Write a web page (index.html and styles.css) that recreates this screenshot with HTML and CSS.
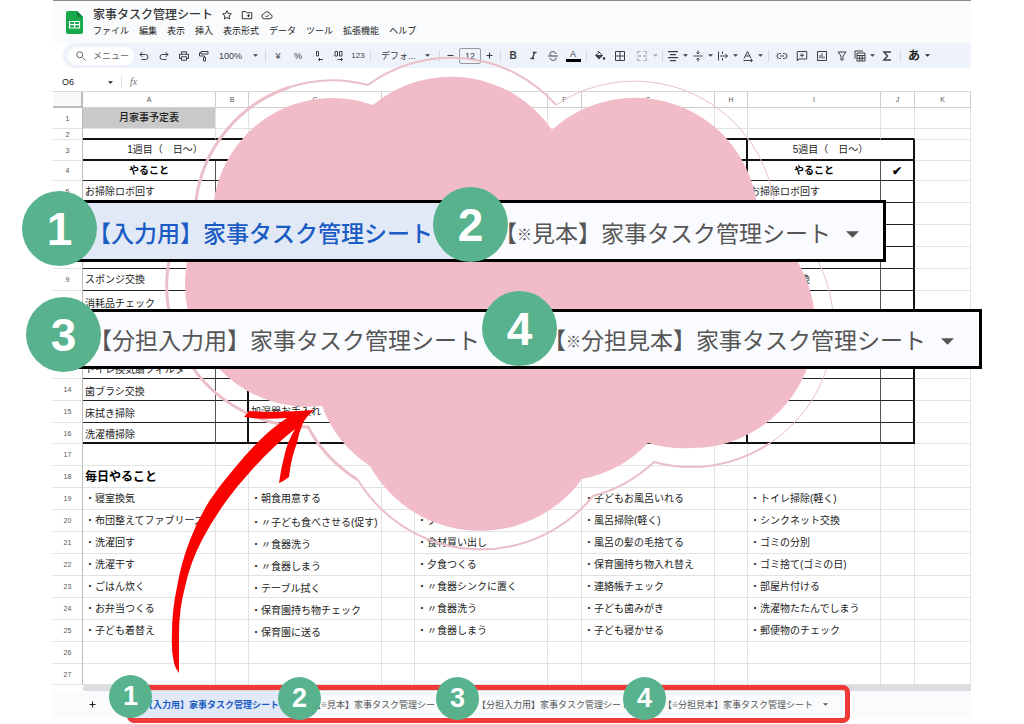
FILE: index.html
```html
<!DOCTYPE html>
<html lang="ja">
<head>
<meta charset="utf-8">
<title>家事タスク管理シート</title>
<link rel="stylesheet" href="styles.css">
</head>
<body>
<svg class="defs" aria-hidden="true">
  <symbol id="caret" viewBox="0 0 10 5"><path d="M0 0h10L5 5z" fill="currentColor"/></symbol>
  <symbol id="star" viewBox="0 0 24 24"><path d="M12 3.500l2.600 5.600 6.100.7-4.500 4.200 1.200 6-5.400-3-5.400 3 1.200-6-4.500-4.200 6.100-.7z"/></symbol>
  <symbol id="folder" viewBox="0 0 24 24"><path d="M2.500 5h7l2 2.500h10V19.500h-19zM12 13.500h6M15 10.500v6"/></symbol>
  <symbol id="cloud" viewBox="0 0 24 24"><path d="M6.500 19.500a5 5 0 0 1-.7-9.900 6.700 6.700 0 0 1 12.600 1 4.500 4.500 0 0 1 0 8.900zM8.500 13.500l2.500 2.500 4.500-4.500"/></symbol>
  <symbol id="search" viewBox="0 0 24 24"><path d="M15 15l6 6"/><circle cx="9.500" cy="9.500" r="6"/></symbol>
  <symbol id="undo" viewBox="0 0 24 24"><path d="M9 4L4 9l5 5M4 9h11a4.500 4.500 0 0 1 0 10H7"/></symbol>
  <symbol id="redo" viewBox="0 0 24 24"><path d="M15 4l5 5-5 5M20 9H9a4.500 4.500 0 0 0 0 10h8"/></symbol>
  <symbol id="print" viewBox="0 0 24 24"><path d="M7 8V3.500h10V8M7 17H3V8.500h18V17h-4M7 13.500h10v7H7z"/></symbol>
  <symbol id="paint" viewBox="0 0 24 24"><path d="M6 3h14v5H6zM6 5.500H3V12h10v3M11 15h4v7h-4z"/></symbol>
  <symbol id="dec-less" viewBox="0 0 24 24"><path d="M3 12h1M9 3h4v9H9zM22 19h-9M16 16l-3 3 3 3"/></symbol>
  <symbol id="dec-more" viewBox="0 0 24 24"><path d="M1 12h1M6 3h5v9H6zM15 3h5v9h-5zM11 19h10M18 16l3 3-3 3"/></symbol>
  <symbol id="minus" viewBox="0 0 24 24"><path d="M4 12h16"/></symbol>
  <symbol id="plus" viewBox="0 0 24 24"><path d="M4 12h16M12 4v16"/></symbol>
  <symbol id="italic" viewBox="0 0 24 24"><path d="M10 4h10M4 20h10M15 4L9 20" stroke-width="3.500"/></symbol>
  <symbol id="strike" viewBox="0 0 24 24"><path d="M2 12h20M18 8c-.5-6-12-6-12-1 0 2 1.500 3 3 3.500M6 16c.5 6 12 6 12 1 0-1-.3-1.500-.7-2"/></symbol>
  <symbol id="bucket" viewBox="0 0 24 24"><path d="M8 2l9 9-7 7-7-7 7-6z"/><path d="M4 11h12l-6 6z" fill="currentColor"/><path d="M20 14c3 4 1 5 0 5s-3-1 0-5z" fill="currentColor"/></symbol>
  <symbol id="borders" viewBox="0 0 24 24"><path d="M3 3h18v18H3zM12 3v18M3 12h18"/></symbol>
  <symbol id="merge" viewBox="0 0 24 24"><path d="M3 8V3h6M15 3h6v5M21 16v5h-6M9 21H3v-5M2 12h7M6 9l3 3-3 3M22 12h-7M18 9l-3 3 3 3"/></symbol>
  <symbol id="align" viewBox="0 0 24 24"><path d="M2 3h20M6 9h12M2 15h20M6 21h12" stroke-width="2.500"/></symbol>
  <symbol id="valign" viewBox="0 0 24 24"><path d="M3 12h18M12 1v7M9 5l3 3 3-3M12 23v-7M9 19l3-3 3 3"/></symbol>
  <symbol id="wrap" viewBox="0 0 24 24"><path d="M3 3v18M11 3v5M11 16v5M6 12h15M17 8l4 4-4 4"/></symbol>
  <symbol id="rotate" viewBox="0 0 24 24"><path d="M4 17L11 3l7 14M7 12h8M3 21h18M18 18l3 3-3 3"/></symbol>
  <symbol id="link" viewBox="0 0 24 24"><path d="M10 7H7a5 5 0 0 0 0 10h3M14 7h3a5 5 0 0 1 0 10h-3M8 12h8"/></symbol>
  <symbol id="comment" viewBox="0 0 24 24"><path d="M2.500 22V3h19v15H6zM12 6.500v8M8 10.500h8"/></symbol>
  <symbol id="chart" viewBox="0 0 24 24"><path d="M3 3h18v18H3zM8 10v7M12 7v10M16 13v4"/></symbol>
  <symbol id="filter" viewBox="0 0 24 24"><path d="M4 4h16l-6 8v8h-4v-8z"/></symbol>
  <symbol id="views" viewBox="0 0 24 24"><path d="M2 17V2h16M6 6h16v16H6zM6 11h16M6 16.500h16M11.500 11v11M16.500 11v11"/></symbol>
  <symbol id="sigma" viewBox="0 0 24 24"><path d="M18 6V4H6l7 8-7 8h12v-2" stroke-width="3"/></symbol>
</svg>

<main class="stage">
  <div class="app">
    <header class="top">
      <svg class="logo" viewBox="0 0 17 23"><path d="M2 0h9l6 6v15a2 2 0 0 1-2 2H2a2 2 0 0 1-2-2V2a2 2 0 0 1 2-2z" fill="#16a84b"/><path d="M11 0l6 6h-4a2 2 0 0 1-2-2z" fill="#0b7d37"/><path d="M3.500 10.500h10v6.500h-10zM3.500 13.700h10M8.500 10.500V17" fill="none" stroke="#fff" stroke-width="1.200"/></svg>
      <div class="heading">
        <div class="title-row">
          <h1>家事タスク管理シート</h1>
          <button aria-label="スター"><svg class="icon"><use href="#star"/></svg></button>
          <button aria-label="移動"><svg class="icon"><use href="#folder"/></svg></button>
          <button aria-label="保存状況"><svg class="icon"><use href="#cloud"/></svg></button>
        </div>
        <nav class="menu">
          <button>ファイル</button><button>編集</button><button>表示</button><button>挿入</button><button>表示形式</button><button>データ</button><button>ツール</button><button>拡張機能</button><button>ヘルプ</button>
        </nav>
      </div>
    </header>

    <div class="toolbar">
      <button class="pill"><svg class="icon"><use href="#search"/></svg>メニュー</button>
      <button class="tool" aria-label="元に戻す"><svg class="icon"><use href="#undo"/></svg></button>
      <button class="tool" aria-label="やり直し"><svg class="icon"><use href="#redo"/></svg></button>
      <button class="tool" aria-label="印刷"><svg class="icon"><use href="#print"/></svg></button>
      <button class="tool" aria-label="書式の貼り付け"><svg class="icon"><use href="#paint"/></svg></button>
      <label class="pick zoom"><select aria-label="ズーム"><option>100%</option></select><svg class="caret"><use href="#caret"/></svg></label>
      <i class="sep"></i>
      <button class="tool">¥</button>
      <button class="tool">%</button>
      <button class="tool" aria-label="小数点以下を減らす"><svg class="icon"><use href="#dec-less"/></svg></button>
      <button class="tool" aria-label="小数点以下を増やす"><svg class="icon"><use href="#dec-more"/></svg></button>
      <button class="tool small">123</button>
      <i class="sep"></i>
      <label class="pick family"><select aria-label="フォント"><option>デフォ...</option></select><svg class="caret"><use href="#caret"/></svg></label>
      <i class="sep"></i>
      <button class="tool narrow" aria-label="縮小"><svg class="icon tiny"><use href="#minus"/></svg></button>
      <input class="size" aria-label="フォントサイズ" value="12">
      <button class="tool narrow" aria-label="拡大"><svg class="icon tiny"><use href="#plus"/></svg></button>
      <i class="sep"></i>
      <button class="tool bold">B</button>
      <button class="tool" aria-label="斜体"><svg class="icon tiny"><use href="#italic"/></svg></button>
      <button class="tool" aria-label="取り消し線"><svg class="icon"><use href="#strike"/></svg></button>
      <button class="tool"><span class="ink">A</span></button>
      <i class="sep wide"></i>
      <button class="tool" aria-label="塗りつぶし"><svg class="icon"><use href="#bucket"/></svg></button>
      <button class="tool" aria-label="枠線"><svg class="icon"><use href="#borders"/></svg></button>
      <button class="drop faint" aria-label="結合"><svg class="icon"><use href="#merge"/></svg><svg class="caret"><use href="#caret"/></svg></button>
      <i class="sep"></i>
      <button class="drop" aria-label="水平方向"><svg class="icon"><use href="#align"/></svg><svg class="caret"><use href="#caret"/></svg></button>
      <button class="drop" aria-label="垂直方向"><svg class="icon"><use href="#valign"/></svg><svg class="caret"><use href="#caret"/></svg></button>
      <button class="drop" aria-label="折り返し"><svg class="icon"><use href="#wrap"/></svg><svg class="caret"><use href="#caret"/></svg></button>
      <button class="drop" aria-label="回転"><svg class="icon"><use href="#rotate"/></svg><svg class="caret"><use href="#caret"/></svg></button>
      <i class="sep wide"></i>
      <button class="tool" aria-label="リンク"><svg class="icon"><use href="#link"/></svg></button>
      <button class="tool" aria-label="コメント"><svg class="icon"><use href="#comment"/></svg></button>
      <button class="tool" aria-label="グラフ"><svg class="icon"><use href="#chart"/></svg></button>
      <button class="tool" aria-label="フィルタ"><svg class="icon"><use href="#filter"/></svg></button>
      <button class="drop" aria-label="表示"><svg class="icon"><use href="#views"/></svg><svg class="caret"><use href="#caret"/></svg></button>
      <button class="tool" aria-label="関数"><svg class="icon"><use href="#sigma"/></svg></button>
      <i class="sep wide"></i>
      <button class="drop kana">あ<svg class="caret"><use href="#caret"/></svg></button>
    </div>

    <div class="formula">
      <input class="name-box" aria-label="セル" value="O6">
      <svg class="caret"><use href="#caret"/></svg>
      <span class="fx">fx</span>
    </div>

    <table class="sheet">
      <colgroup><col class="c-num"><col class="c-task"><col class="c-check"><col class="c-task"><col class="c-check"><col class="c-task"><col class="c-check"><col class="c-task"><col class="c-check"><col class="c-task"><col class="c-check"><col></colgroup>
      <thead><tr><th class="corner"></th><th>A</th><th>B</th><th>C</th><th>D</th><th>E</th><th>F</th><th>G</th><th>H</th><th>I</th><th>J</th><th>K</th></tr></thead>
      <tbody>
      <tr class="r-title"><th>1</th><td class="month">月家事予定表</td><td></td><td></td><td></td><td></td><td></td><td></td><td></td><td></td><td></td><td></td></tr>
      <tr class="r-gap"><th>2</th><td></td><td></td><td></td><td></td><td></td><td></td><td></td><td></td><td></td><td></td><td></td></tr>
      <tr class="r-week"><th>3</th><td colspan="2">1週目（　日〜）</td><td colspan="2"></td><td colspan="2"></td><td colspan="2"></td><td colspan="2">5週目（　日〜）</td><td></td></tr>
      <tr class="task r-head"><th>4</th><td>やること</td><td></td><td></td><td></td><td></td><td></td><td></td><td></td><td>やること</td><td class="tick">✔</td><td></td></tr>
      <tr class="task"><th>5</th><td>お掃除ロボ回す</td><td></td><td></td><td></td><td></td><td></td><td></td><td></td><td>お掃除ロボ回す</td><td></td><td></td></tr>
      <tr class="task"><th></th><td></td><td></td><td></td><td></td><td></td><td></td><td></td><td></td><td></td><td></td><td></td></tr>
      <tr class="task"><th></th><td></td><td></td><td></td><td></td><td></td><td></td><td></td><td></td><td></td><td></td><td></td></tr>
      <tr class="task"><th></th><td></td><td></td><td></td><td></td><td></td><td></td><td></td><td></td><td></td><td></td><td></td></tr>
      <tr class="task"><th>9</th><td>スポンジ交換</td><td></td><td></td><td></td><td></td><td></td><td></td><td></td><td>スポンジ交換</td><td></td><td></td></tr>
      <tr class="task"><th></th><td class="low">消耗品チェック</td><td></td><td></td><td></td><td></td><td></td><td></td><td></td><td></td><td></td><td></td></tr>
      <tr class="task"><th></th><td></td><td></td><td></td><td></td><td></td><td></td><td></td><td></td><td></td><td></td><td></td></tr>
      <tr class="task"><th></th><td></td><td></td><td></td><td></td><td></td><td></td><td></td><td></td><td></td><td></td><td></td></tr>
      <tr class="task"><th></th><td class="low">トイレ換気扇フィルター</td><td></td><td></td><td></td><td></td><td></td><td></td><td></td><td></td><td></td><td></td></tr>
      <tr class="task"><th>14</th><td class="low">歯ブラシ交換</td><td></td><td></td><td></td><td></td><td></td><td></td><td></td><td></td><td></td><td></td></tr>
      <tr class="task"><th>15</th><td class="low">床拭き掃除</td><td></td><td>加湿器お手入れ</td><td></td><td></td><td></td><td></td><td></td><td></td><td></td><td></td></tr>
      <tr class="task short last"><th>16</th><td class="low">洗濯槽掃除</td><td></td><td></td><td></td><td></td><td></td><td></td><td></td><td></td><td></td><td></td></tr>
      <tr><th>17</th><td></td><td></td><td></td><td></td><td></td><td></td><td></td><td></td><td></td><td></td><td></td></tr>
      <tr><th>18</th><td class="daily">毎日やること</td><td></td><td></td><td></td><td></td><td></td><td></td><td></td><td></td><td></td><td></td></tr>
      <tr><th>19</th><td>・寝室換気</td><td></td><td>・朝食用意する</td><td></td><td></td><td></td><td>・子どもお風呂いれる</td><td></td><td>・トイレ掃除(軽く)</td><td></td><td></td></tr>
      <tr><th>20</th><td>・布団整えてファブリーズ</td><td></td><td class="low">・〃子ども食べさせる(促す)</td><td></td><td>・ク</td><td></td><td>・風呂掃除(軽く)</td><td></td><td>・シンクネット交換</td><td></td><td></td></tr>
      <tr><th>21</th><td>・洗濯回す</td><td></td><td class="low">・〃食器洗う</td><td></td><td>・食材買い出し</td><td></td><td>・風呂の髪の毛捨てる</td><td></td><td>・ゴミの分別</td><td></td><td></td></tr>
      <tr><th>22</th><td>・洗濯干す</td><td></td><td class="low">・〃食器しまう</td><td></td><td>・夕食つくる</td><td></td><td>・保育園持ち物入れ替え</td><td></td><td>・ゴミ捨て(ゴミの日)</td><td></td><td></td></tr>
      <tr><th>23</th><td>・ごはん炊く</td><td></td><td class="low">・テーブル拭く</td><td></td><td>・〃食器シンクに置く</td><td></td><td>・連絡帳チェック</td><td></td><td>・部屋片付ける</td><td></td><td></td></tr>
      <tr><th>24</th><td>・お弁当つくる</td><td></td><td class="low">・保育園持ち物チェック</td><td></td><td>・〃食器洗う</td><td></td><td>・子ども歯みがき</td><td></td><td>・洗濯物たたんでしまう</td><td></td><td></td></tr>
      <tr><th>25</th><td>・子ども着替え</td><td></td><td class="low">・保育園に送る</td><td></td><td>・〃食器しまう</td><td></td><td>・子ども寝かせる</td><td></td><td>・郵便物のチェック</td><td></td><td></td></tr>
      <tr><th>26</th><td></td><td></td><td></td><td></td><td></td><td></td><td></td><td></td><td></td><td></td><td></td></tr>
      <tr class="short"><th>27</th><td></td><td></td><td></td><td></td><td></td><td></td><td></td><td></td><td></td><td></td><td></td></tr>
      </tbody>
    </table>
    <div class="scrollbar"></div>
    <footer class="tabs">
      <button class="add" aria-label="シートを追加"><svg class="icon tiny"><use href="#plus"/></svg></button>
      <button class="tab active">【入力用】家事タスク管理シート<svg class="caret"><use href="#caret"/></svg></button>
      <button class="tab"><span>【<small>※</small>見本】家事タスク管理シート</span><svg class="caret"><use href="#caret"/></svg></button>
      <button class="tab">【分担入力用】家事タスク管理シート<svg class="caret"><use href="#caret"/></svg></button>
      <button class="tab"><span>【<small>※</small>分担見本】家事タスク管理シート</span><svg class="caret"><use href="#caret"/></svg></button>
    </footer>
  </div>

  <svg class="blob" viewBox="0 0 1024 724" aria-hidden="true">
    <path fill="#f1bcc7" d="M213 207A120 120 0 0 1 373 105A122 122 0 0 1 552 130A123 123 0 0 1 758 221A123 123 0 0 1 815 325A123 123 0 0 1 692 448A130 130 0 0 1 648 443A123 123 0 0 1 582 479A126 126 0 0 1 370 466A123 123 0 0 1 322 406A123 123 0 0 1 185 285A123 123 0 0 1 213 207z"/>
    <g fill="none" stroke="#eabfc8">
      <path stroke-width="3" d="M358 480A141 141 0 0 1 308 427A141 141 0 0 1 196 200A138 138 0 0 1 290 87"/>
      <path stroke-width="2" d="M290 87A138 138 0 0 1 368 85A140 140 0 0 1 556 105"/>
      <path stroke-width="1" d="M556 105A141 141 0 0 1 775 211A141 141 0 0 1 770 443"/>
      <path stroke-width="2" d="M770 443A141 141 0 0 1 654 462A141 141 0 0 1 593 496A144 144 0 0 1 358 480"/>
    </g>
  </svg>

  <section class="zoomed first">
    <button class="tab active">【入力用】家事タスク管理シート<svg class="caret"><use href="#caret"/></svg></button>
    <button class="tab"><span>【<small>※</small>見本】家事タスク管理シート</span><svg class="caret"><use href="#caret"/></svg></button>
  </section>
  <section class="zoomed second">
    <button class="tab">【分担入力用】家事タスク管理シート<svg class="caret"><use href="#caret"/></svg></button>
    <button class="tab"><span>【<small>※</small>分担見本】家事タスク管理シート</span><svg class="caret"><use href="#caret"/></svg></button>
  </section>

  <svg class="blob" viewBox="0 0 1024 724" aria-hidden="true">
    <path fill="#f90300" d="M179 673Q175 668 174 663Q171 650 172 633Q172 610 177 587Q181 563 190 540Q198 519 210 500Q220 485 233 470Q245 455 260 440Q272 428 287 418Q262 420 244 417L249 411Q280 413 314 410Q306 417 303 423Q299 432 297 443Q291 458 289 477Q284 481 279 483Q281 468 285 453Q288 441 295 429Q271 448 250 472Q237 486 227 500Q213 519 202 540Q190 563 185 587Q179 610 179 633z"/>
  </svg>
  <div class="frame"></div>

  <b class="badge b1">1</b><b class="badge b2">2</b><b class="badge b3">3</b><b class="badge b4">4</b>
  <b class="badge mini m1">1</b><b class="badge mini m2">2</b><b class="badge mini m3">3</b><b class="badge mini m4">4</b>
</main>
</body>
</html>
```
FILE: styles.css
```css
* { box-sizing: border-box; }
body { margin: 0; background: #fff; color: #222; font: 10px/14px "Liberation Sans", "Noto Sans CJK JP", sans-serif; }
button, input, select { margin: 0; padding: 0; border: 0; background: none; color: inherit; font: inherit; }
.defs { display: none; }
.stage { position: relative; min-height: 100vh; overflow: hidden; }
.app { margin: 0 53px; border-top: 1px solid #8b8b90; }
.icon { display: block; width: 12px; height: 12px; fill: none; stroke: currentColor; stroke-width: 2; }
.tiny { width: 9px; height: 9px; stroke-width: 3; }
.caret { display: block; flex: none; width: 5px; height: 3px; }

.top { display: flex; gap: 10px; height: 42px; padding: 10px 13px 0; background: #f9fbfd; }
.logo { width: 17px; height: 23px; }
.heading { margin-top: -4px; }
.title-row { display: flex; align-items: center; gap: 8px; height: 16px; color: #333; }
h1 { margin: 0; font-size: 12px; line-height: 16px; font-weight: 500; }
.menu { display: flex; gap: 10px; height: 16px; font-size: 9px; line-height: 16px; white-space: nowrap; }

.toolbar { display: flex; align-items: center; height: 25px; margin-left: 10px; padding-left: 5px; border-radius: 12px 0 0 12px; background: #eef2fa; color: #3c4043; font-size: 9px; white-space: nowrap; }
.toolbar > * { flex: none; }
.pill { display: flex; align-items: center; gap: 6px; width: 66px; height: 18px; padding-left: 7px; border-radius: 9px; background: #fff; color: #666; }
.tool { display: flex; align-items: center; justify-content: center; width: 20px; height: 18px; }
.narrow { width: 17px; }
.small { font-size: 8px; }
.bold { font-size: 10px; font-weight: bold; }
.ink { width: 15px; border-bottom: 3px solid #000; font-size: 9px; line-height: 9px; }
.pick { display: flex; align-items: center; justify-content: space-between; padding: 0 5px; }
.pick select { appearance: none; }
.zoom { width: 49px; }
.family { width: 64px; padding: 0 7px 0 8px; }
.sep { width: 5px; height: 12px; background: linear-gradient(#d3d8e0, #d3d8e0) center / 1px 100% no-repeat; }
.wide { width: 7px; }
.size { width: 22px; height: 16px; border: 1px solid #999; border-radius: 2px; text-align: center; }
.drop { display: flex; align-items: center; justify-content: space-between; width: 25px; height: 18px; padding: 0 2px; }
.faint { width: 30px; padding-left: 6px; color: #aaa; }
.kana { width: 30px; padding: 0 4px; color: #222; font-size: 12px; font-weight: bold; }

.formula { display: flex; align-items: center; height: 23px; padding: 5px 9px 0; }
.name-box { width: 46px; font-size: 9px; }
.fx { margin-left: 8px; padding-left: 8px; border-left: 1px solid #ddd; color: #777; font: italic 10px/12px "Liberation Serif", serif; }

.sheet { width: 100%; table-layout: fixed; border-collapse: separate; border-spacing: 0; border-top: 1px solid #d8d8d8; }
.c-num { width: 30px; }
.c-task { width: 133px; }
.c-check { width: 33px; }
.c-check:nth-child(4n + 3) { width: 34px; }
.c-check:nth-child(3) { width: 33px; }
.sheet tr { height: 22px; }
.sheet thead tr { height: 16px; }
.sheet .r-title { height: 21px; }
.sheet .r-gap { height: 11px; }
.sheet .r-week, .sheet .short { height: 21px; }
.sheet .r-head { height: 20px; }
.sheet th, .sheet td { padding: 0 2px; border: 0 solid #e2e2e2; border-width: 0 1px 1px 0; overflow: hidden; white-space: nowrap; }
.sheet th { color: #555; font-size: 7px; line-height: 9px; font-weight: normal; text-align: center; }
.sheet thead th { border-color: #cfcfcf; }
.sheet th.corner { border: solid #bbb; border-width: 0 2px 2px 0; background: #f8f9fa; }
.sheet tbody th { border-right-color: #bbb; }
.sheet .month { background: #c9c9c9; text-align: center; font-weight: 500; }
.r-gap td:not(:last-child) { border-bottom: 2px solid #111; }
.r-week td:not(:last-child) { border-bottom: 2px solid #111; border-right: 2px solid #111; text-align: center; }
.task td:not(:last-child) { border-bottom-color: #222; border-right-color: #555; }
.task td:nth-child(odd) { border-right: 2px solid #111; }
.last td:not(:last-child) { border-bottom-width: 2px; border-bottom-color: #111; }
.r-head td { text-align: center; font-weight: bold; color: #000; }
.sheet .tick { font-size: 12px; line-height: 12px; }
.sheet .low { padding-top: 5px; }
.sheet .daily { font-size: 12px; font-weight: bold; color: #000; }

.scrollbar { height: 6px; margin-left: 30px; border-radius: 3px 0 0 3px; background: #dadce0; }
.tabs { display: flex; align-items: center; height: 27px; padding-left: 35px; background: #f9fbfd; font-size: 9px; }
.add { width: 14px; margin-right: 31px; }
.tab { display: flex; flex: none; align-items: center; gap: 10px; height: 100%; margin-right: 4px; padding: 0 3px 0 11px; color: #555; white-space: nowrap; }
.tab small { font-size: 6px; font-weight: bold; vertical-align: 1px; }
.tab.active { background: #e1e9f7; color: #1a5bc4; font-weight: bold; }

.blob { position: absolute; top: 0; left: 0; width: 1024px; height: 724px; pointer-events: none; }
.zoomed { position: absolute; display: flex; border: 3px solid #000; background: #fafbfe; font-size: 23px; line-height: 30px; }
.zoomed .tab { gap: 15px; margin: 0; padding: 6px 24px 0 9px; }
.zoomed .tab.active { font-weight: 500; }
.zoomed small { font-size: 15px; vertical-align: 2px; }
.zoomed .caret { width: 13px; height: 7px; }
.first { top: 200px; left: 76px; height: 62px; }
.second { top: 309px; left: 76px; height: 60px; }
.second .tab { padding: 4px 25px 0 10px; }
.frame { position: absolute; top: 685px; left: 127px; width: 723px; height: 38px; border: 5px solid #ef3938; border-radius: 7px; }

.badge { position: absolute; display: flex; align-items: center; justify-content: center; width: 75px; height: 75px; border-radius: 50%; background: #57b28d; color: #fff; font-size: 46px; line-height: 46px; }
.mini { width: 43px; height: 43px; font-size: 27px; line-height: 27px; }
.b1 { top: 191px; left: 22px; }
.b2 { top: 187px; left: 433px; }
.b3 { top: 297px; left: 26px; }
.b4 { top: 291px; left: 482px; }
.m1 { top: 675px; left: 109px; }
.m2 { top: 677px; left: 278px; }
.m3 { top: 677px; left: 436px; }
.m4 { top: 677px; left: 623px; }
```
